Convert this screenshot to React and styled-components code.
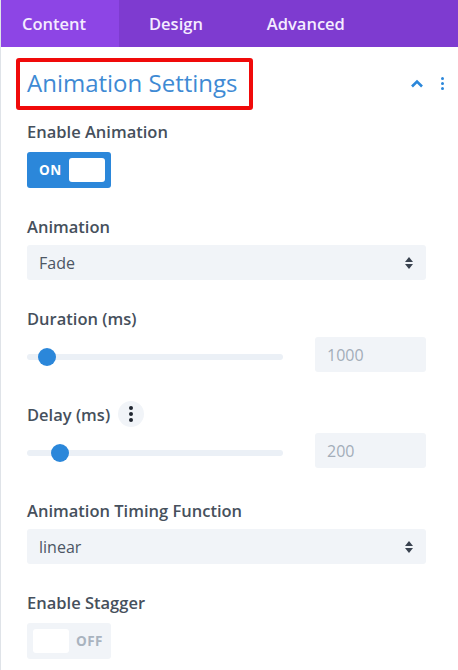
import React from 'react';
import styled, { createGlobalStyle } from 'styled-components';

const GlobalStyle = createGlobalStyle`
  html, body {
    margin: 0;
    padding: 0;
    background: #fff;
    font-family: 'Open Sans', 'Noto Sans', sans-serif;
  }
  * { box-sizing: border-box; }
`;

const tabs = ['Content', 'Design', 'Advanced'];

const Toggle = ({ on }) => (
  <StyledToggle on={on}>
    {on ? (
      <>
        <StyledToggleText on={on}>ON</StyledToggleText>
        <StyledKnob />
      </>
    ) : (
      <>
        <StyledKnob />
        <StyledToggleText on={on}>OFF</StyledToggleText>
      </>
    )}
  </StyledToggle>
);

const Select = ({ value }) => (
  <StyledSelect>
    <span>{value}</span>
    <svg width="8" height="12" viewBox="0 0 8 12">
      <path d="M4 0 L8 5 H0 Z M0 7 H8 L4 12 Z" fill="#3a4350" />
    </svg>
  </StyledSelect>
);

const Range = ({ percent, value }) => (
  <StyledRangeRow>
    <StyledTrack>
      <StyledThumb style={{ left: `${percent}%` }} />
    </StyledTrack>
    <StyledNumber>{value}</StyledNumber>
  </StyledRangeRow>
);

const Dots = ({ color = '#2b87da', size = 3, gap = 2 }) => (
  <svg width={size} height={size * 3 + gap * 2} viewBox={`0 0 ${size} ${size * 3 + gap * 2}`}>
    {[0, 1, 2].map(i => (
      <circle key={i} cx={size / 2} cy={size / 2 + i * (size + gap)} r={size / 2} fill={color} />
    ))}
  </svg>
);

export default function App() {
  return (
    <StyledPanel>
      <GlobalStyle />
      <StyledTabs>
        {tabs.map((tab, index) => (
          <StyledTab key={tab} isActive={index === 0}>
            {tab}
          </StyledTab>
        ))}
      </StyledTabs>
      <StyledHeader>
        <StyledTitle>Animation Settings</StyledTitle>
        <StyledHeaderIcons>
          <svg width="14" height="9" viewBox="0 0 14 9">
            <path d="M2 7.5 L7 2.5 L12 7.5" stroke="#2b87da" strokeWidth="2.6" fill="none" />
          </svg>
          <Dots />
        </StyledHeaderIcons>
      </StyledHeader>
      <StyledBody>
        <StyledField>
          <StyledLabel>Enable Animation</StyledLabel>
          <Toggle on />
        </StyledField>
        <StyledField>
          <StyledLabel>Animation</StyledLabel>
          <Select value="Fade" />
        </StyledField>
        <StyledField>
          <StyledLabel>Duration (ms)</StyledLabel>
          <Range percent={8} value="1000" />
        </StyledField>
        <StyledField>
          <StyledLabel>
            Delay (ms)
            <StyledMenuButton>
              <Dots color="#1f2530" size={4} gap={2} />
            </StyledMenuButton>
          </StyledLabel>
          <Range percent={13} value="200" />
        </StyledField>
        <StyledField>
          <StyledLabel>Animation Timing Function</StyledLabel>
          <Select value="linear" />
        </StyledField>
        <StyledField>
          <StyledLabel>Enable Stagger</StyledLabel>
          <Toggle on={false} />
        </StyledField>
      </StyledBody>
    </StyledPanel>
  );
}

const StyledPanel = styled.div`
  width: 458px;
  height: 670px;
  overflow: hidden;
  border-left: 1px solid #dfe3e8;
  background: #fff;
`;

const StyledTabs = styled.nav`
  display: flex;
  height: 47px;
  background: #7e3bd0;
  margin-left: -1px;
`;

const StyledTab = styled.div`
  display: flex;
  align-items: center;
  padding: 0 32px 0 22px;
  width: ${({ isActive }) => (isActive ? '119px' : 'auto')};
  background: ${({ isActive }) => (isActive ? '#8d45e5' : 'transparent')};
  color: #f4ecff;
  font-size: 16.5px;
  font-weight: 600;
  & + & {
    padding: 0 34px 0 30px;
  }
`;

const StyledHeader = styled.div`
  display: flex;
  align-items: center;
  justify-content: space-between;
  padding: 11px 14px 0 15px;
`;

const StyledTitle = styled.h1`
  margin: 0;
  border: 4px solid #f00a0a;
  border-radius: 3px;
  padding: 5px 11px 7px 7px;
  font-size: 24px;
  font-weight: 400;
  color: #3e8ad4;
  line-height: 32px;
`;

const StyledHeaderIcons = styled.div`
  display: flex;
  align-items: center;
  gap: 17px;
  margin-top: -2px;
`;

const StyledBody = styled.div`
  display: flex;
  flex-direction: column;
  gap: 26px;
  padding: 9px 32px 0 26px;
`;

const StyledField = styled.div`
  display: flex;
  flex-direction: column;
  gap: 7px;
`;

const StyledLabel = styled.label`
  display: flex;
  align-items: center;
  gap: 8px;
  height: 24px;
  font-size: 16.5px;
  font-weight: 600;
  color: #46505c;
`;

const StyledMenuButton = styled.span`
  display: inline-flex;
  align-items: center;
  justify-content: center;
  width: 26px;
  height: 26px;
  border-radius: 50%;
  background: #f1f4f8;
`;

const StyledToggle = styled.div`
  display: flex;
  align-items: center;
  justify-content: space-between;
  width: 84px;
  height: 36px;
  margin-top: 2px;
  padding: ${({ on }) => (on ? '0 6px 0 12px' : '0 8px 0 6px')};
  border-radius: 3px;
  background: ${({ on }) => (on ? '#2b87da' : '#f1f4f8')};
`;

const StyledToggleText = styled.span`
  font-size: 13.5px;
  font-weight: 700;
  letter-spacing: 0.5px;
  color: ${({ on }) => (on ? '#fff' : '#a9b3bf')};
`;

const StyledKnob = styled.span`
  width: 36px;
  height: 24px;
  border-radius: 3px;
  background: #fff;
`;

const StyledSelect = styled.div`
  display: flex;
  align-items: center;
  justify-content: space-between;
  height: 35px;
  padding: 0 13px 0 12px;
  border-radius: 3px;
  background: #f1f4f8;
  font-size: 16px;
  color: #4c5664;
`;

const StyledRangeRow = styled.div`
  display: flex;
  align-items: center;
  justify-content: space-between;
  height: 35px;
  margin-bottom: 4px;
`;

const StyledTrack = styled.div`
  position: relative;
  width: 256px;
  height: 6px;
  margin-top: 5px;
  border-radius: 3px;
  background: #ebf0f6;
`;

const StyledThumb = styled.span`
  position: absolute;
  top: 50%;
  width: 18px;
  height: 18px;
  margin: -9px 0 0 -9px;
  border-radius: 50%;
  background: #2b87da;
`;

const StyledNumber = styled.div`
  display: flex;
  align-items: center;
  width: 111px;
  height: 35px;
  padding: 0 12px;
  border-radius: 3px;
  background: #f1f4f8;
  font-size: 16px;
  color: #a3adb8;
`;
